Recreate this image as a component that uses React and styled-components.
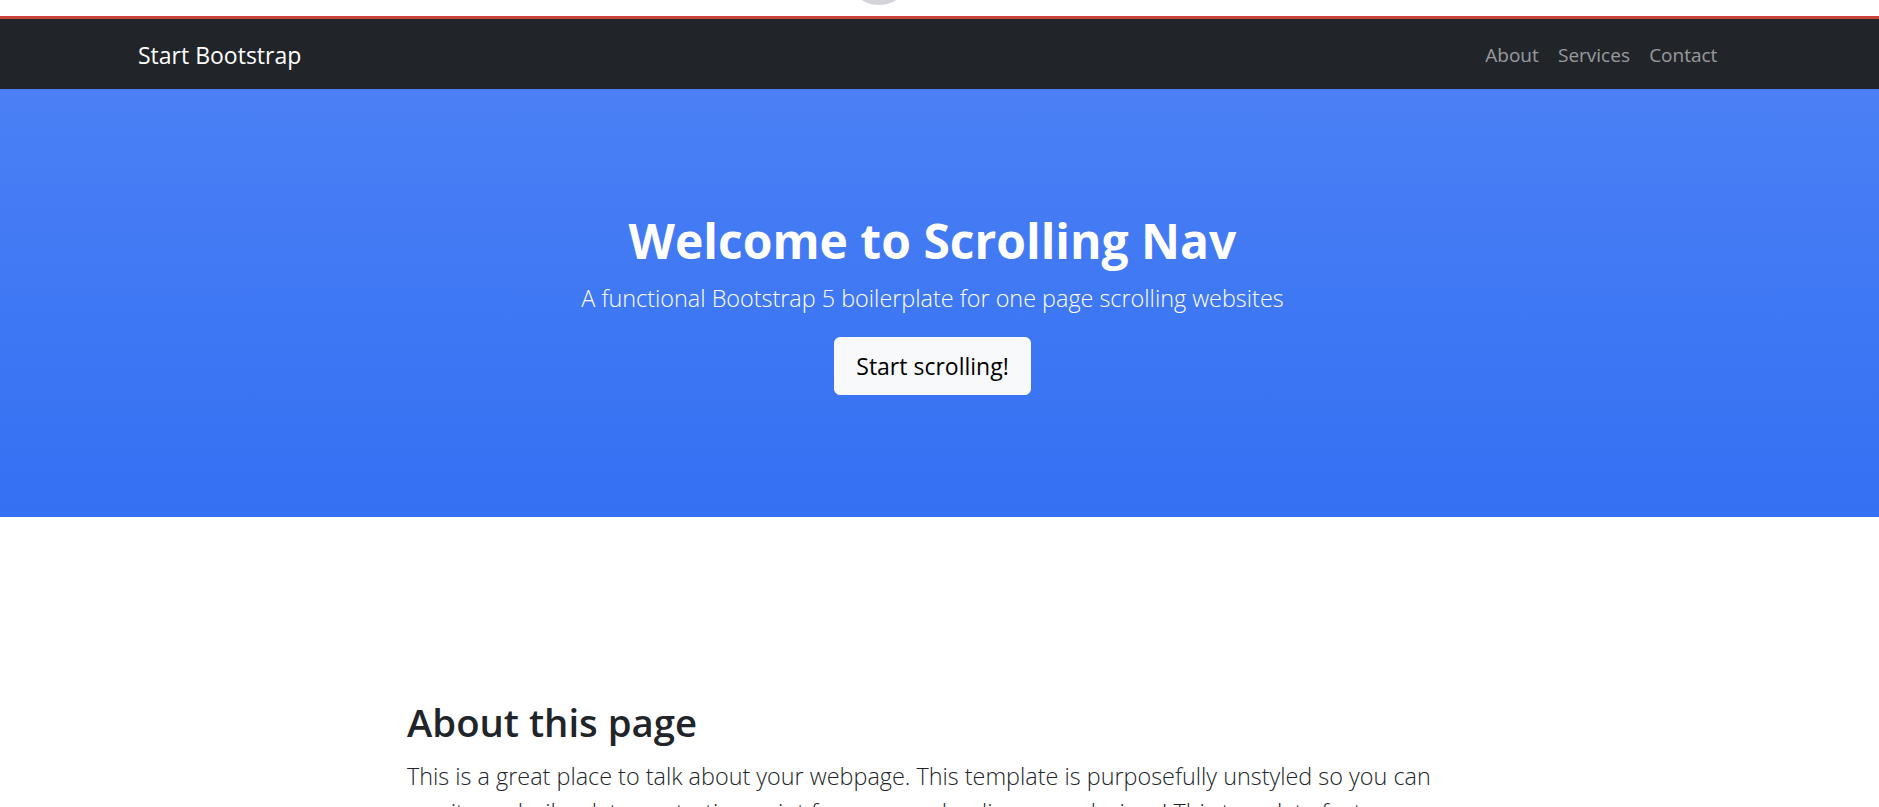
import styled, { createGlobalStyle } from "styled-components";

const GlobalStyle = createGlobalStyle`
  html, body {
    margin: 0;
    padding: 0;
    background: #fff;
  }
  body {
    font-family: "Open Sans", "Noto Sans", sans-serif;
    color: #212529;
    overflow: hidden;
  }
  * {
    box-sizing: border-box;
  }
`;

const Page = styled.div`
  width: 100%;
  min-height: 807px;
`;

const TopStrip = styled.div`
  position: relative;
  height: 16px;
  background: #fff;
  overflow: hidden;
`;

// little grey bubble peeking in at the top edge
const Bubble = styled.span`
  position: absolute;
  left: 846px;
  top: -61px;
  width: 66px;
  height: 66px;
  border-radius: 50%;
  background: #d2d4d8;
`;

const Navbar = styled.nav`
  height: 73px;
  border-top: 3px solid #c8443a;
  background-color: #212529;
  display: flex;
  align-items: center;
  justify-content: space-between;
  padding: 2px 152px 0 138px;
`;

const Brand = styled.a`
  color: #fff;
  font-size: 23px;
  text-decoration: none;
  line-height: 1.5;
  cursor: pointer;
`;

const NavLinks = styled.ul`
  display: flex;
  list-style: none;
  margin: 0;
  padding: 0;
`;

const NavLink = styled.a`
  display: block;
  padding: 8px 9.6px;
  font-size: 19px;
  color: rgba(255, 255, 255, 0.55);
  text-decoration: none;
  cursor: pointer;
`;

const Hero = styled.header`
  background: linear-gradient(180deg, #4b80f5 0%, #3370f3 100%);
  color: #fff;
  padding: 123px 152px 122px 138px;
  display: flex;
  flex-direction: column;
  align-items: center;
  text-align: center;
`;

const Title = styled.h1`
  margin: 0 0 10px;
  font-size: 48px;
  font-weight: 700;
  line-height: 1.2;
`;

const Lead = styled.p`
  margin: 0 0 21px;
  font-size: 23.4px;
  font-weight: 300;
  line-height: 36px;
`;

const HeroButton = styled.a`
  display: inline-block;
  padding: 10px 21px;
  font-size: 23px;
  line-height: 36px;
  color: #000;
  background-color: #f8f9fa;
  border: 1px solid #f8f9fa;
  border-radius: 6px;
  text-decoration: none;
  cursor: pointer;
`;

const Section = styled.section`
  padding: 183px 0 0 407px;
`;

const Content = styled.div`
  width: 1024px;
`;

const Heading = styled.h2`
  margin: 0 0 12px;
  font-size: 38.3px;
  font-weight: 600;
  line-height: 1.2;
  color: #212529;
`;

const Paragraph = styled.p`
  margin: 0;
  font-size: 23.4px;
  font-weight: 300;
  line-height: 36px;
  color: #212529;
`;

const links = ["About", "Services", "Contact"];

const App = () => {
  return (
    <>
      <GlobalStyle />
      <Page>
        <TopStrip>
          <Bubble />
        </TopStrip>
        <Navbar>
          <Brand>Start Bootstrap</Brand>
          <NavLinks>
            {links.map((l) => (
              <li key={l}>
                <NavLink>{l}</NavLink>
              </li>
            ))}
          </NavLinks>
        </Navbar>
        <Hero>
          <Title>Welcome to Scrolling Nav</Title>
          <Lead>A functional Bootstrap 5 boilerplate for one page scrolling websites</Lead>
          <HeroButton>Start scrolling!</HeroButton>
        </Hero>
        <Section>
          <Content>
            <Heading>About this page</Heading>
            <Paragraph>
              This is a great place to talk about your webpage. This template is purposefully unstyled so you can use it as a
              boilerplate or starting point for you own landing page designs! This template features:
            </Paragraph>
          </Content>
        </Section>
      </Page>
    </>
  );
};

export default App;
